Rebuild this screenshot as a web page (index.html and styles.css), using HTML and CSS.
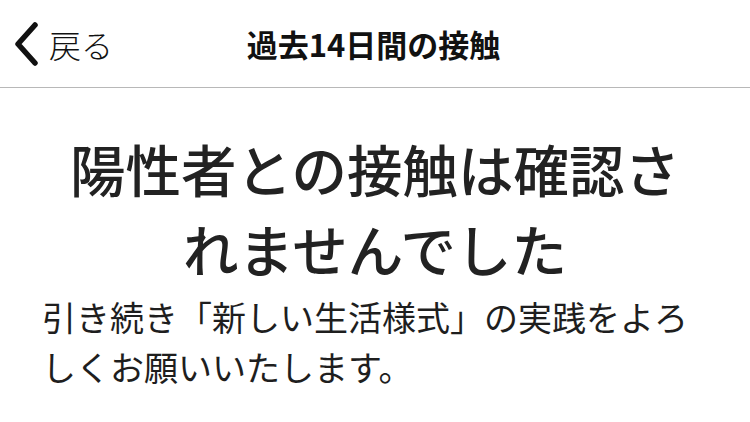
FILE: index.html
```html
<!DOCTYPE html>
<html lang="ja">
<head>
<meta charset="utf-8">
<link rel="stylesheet" href="styles.css">
</head>
<body>
<header class="nav">
  <div class="back">
    <svg class="chev" width="28" height="44" viewBox="0 0 28 44"><path d="M22 3 L5 22 L22 41" fill="none" stroke="#111" stroke-width="5.5" stroke-linecap="round" stroke-linejoin="round"/></svg>
    <span class="back-text">戻る</span>
  </div>
  <div class="title">過去14日間の接触</div>
</header>
<main class="content">
  <h1 class="headline">陽性者との接触は確認されませんでした</h1>
  <p class="body">引き続き「新しい生活様式」の実践をよろしくお願いいたします。</p>
</main>
</body>
</html>
```
FILE: styles.css
```css
html, body {
  margin: 0;
  padding: 0;
  background: #fff;
  font-family: "Noto Sans CJK JP", "Noto Sans", sans-serif;
  color: #1c1c1c;
}
.nav {
  position: relative;
  height: 87px;
  border-bottom: 1px solid #b8b8b8;
  display: flex;
  align-items: center;
  justify-content: center;
}
.back {
  position: absolute;
  left: 13px;
  top: 22px;
  display: flex;
  align-items: center;
  gap: 8px;
}
.chev { display: block; }
.back-text {
  font-size: 32px;
  font-weight: 300;
  color: #111;
  line-height: 44px;
}
.title {
  font-size: 31px;
  font-weight: 700;
  color: #111;
  margin-left: -3px;
}
.content {
  padding: 0 42px;
}
.headline {
  margin: 40px auto 0;
  width: 630px;
  text-align: center;
  font-size: 55.5px;
  font-weight: 500;
  line-height: 80px;
  color: #222;
}
.body {
  margin: 4px 0 0;
  font-size: 34px;
  font-weight: 400;
  line-height: 50px;
  color: #1e1e1e;
}
```
